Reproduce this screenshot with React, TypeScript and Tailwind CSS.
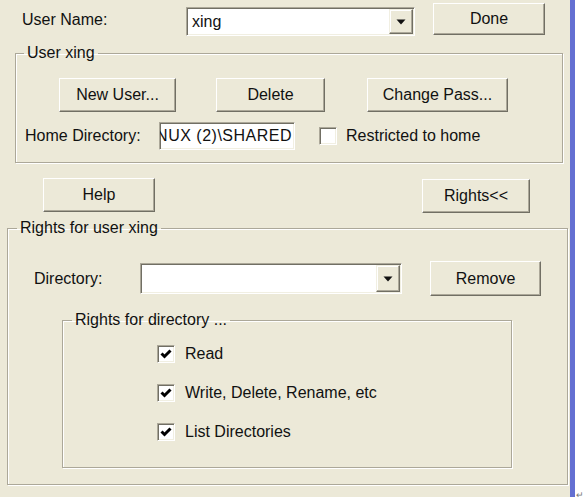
import type { ReactNode } from 'react';

function Btn({ className = '', children }: { className?: string; children: ReactNode }) {
  return (
    <div
      className={`flex shrink-0 items-center justify-center border border-t-white border-l-white border-r-[#716f64] border-b-[#716f64] bg-[#ece9d8] shadow-[inset_-1px_-1px_0_#aca899] ${className}`}
    >
      {children}
    </div>
  );
}

function Combo({ className = '', value = '' }: { className?: string; value?: string }) {
  return (
    <div
      className={`flex shrink-0 border border-t-[#aca899] border-l-[#aca899] border-r-white border-b-white bg-white p-[1px] shadow-[inset_1px_1px_0_#716f64,inset_-1px_-1px_0_#f1efe2] ${className}`}
    >
      <span className="flex-1 self-center pl-[4px]">{value}</span>
      <div className="flex w-[24px] items-center justify-center border border-t-[#f1efe2] border-l-[#f1efe2] border-r-[#716f64] border-b-[#716f64] bg-[#ece9d8] shadow-[inset_-1px_-1px_0_#aca899,inset_1px_1px_0_white]">
        <svg width="10" height="6" viewBox="0 0 10 6">
          <path d="M0.5 0.5 H9.5 L5 5.5 Z" fill="#111" />
        </svg>
      </div>
    </div>
  );
}

function Field({ className = '', value }: { className?: string; value: string }) {
  return (
    <div
      className={`flex shrink-0 items-center justify-end overflow-hidden whitespace-nowrap border border-t-[#aca899] border-l-[#aca899] border-r-white border-b-white bg-white pr-[2px] tracking-[0.5px] shadow-[inset_1px_1px_0_#716f64,inset_-1px_-1px_0_#f1efe2] ${className}`}
    >
      {value}
    </div>
  );
}

function Check({ checked = false, className = '' }: { checked?: boolean; className?: string }) {
  return (
    <div
      className={`flex h-[18px] w-[18px] shrink-0 items-center justify-center border border-t-[#aca899] border-l-[#aca899] border-r-white border-b-white bg-white shadow-[inset_1px_1px_0_#716f64,inset_-1px_-1px_0_#f1efe2] ${className}`}
    >
      {checked && (
        <svg width="12" height="12" viewBox="0 0 12 12">
          <path d="M1.5 5.5 L4.5 8.5 L10.5 2.5" fill="none" stroke="#000" strokeWidth="3" />
        </svg>
      )}
    </div>
  );
}

const groupBox =
  'shrink-0 border border-[#aca899] shadow-[1px_1px_0_white,inset_1px_1px_0_white]';

export default function App() {
  return (
    <div className="flex h-[501px] w-[585px] bg-white font-['Liberation_Sans',Arial,sans-serif] text-[16px] leading-[18px] text-[#111]">
      <div className="flex h-[497px] w-[575px] shrink-0 flex-col border-r-[5px] border-[#6470d2] bg-[#ece9d8]">
        <div className="flex h-[44px] shrink-0 items-start">
          <span className="ml-[22px] mt-[11px] w-[164px] shrink-0">User Name:</span>
          <Combo className="mt-[7px] h-[29px] w-[229px]" value="xing" />
          <Btn className="ml-[18px] mt-[3px] h-[32px] w-[112px]">Done</Btn>
        </div>

        <fieldset className={`${groupBox} ml-[15px] h-[119px] w-[548px]`}>
          <legend className="ml-[8px] px-[3px]">User xing</legend>
          <div className="mt-[16px] flex">
            <Btn className="ml-[43px] h-[34px] w-[117px]">New User...</Btn>
            <Btn className="ml-[40px] h-[34px] w-[109px]">Delete</Btn>
            <Btn className="ml-[42px] h-[34px] w-[141px]">Change Pass...</Btn>
          </div>
          <div className="mt-[10px] flex h-[28px] items-center">
            <span className="ml-[9px] w-[134px] shrink-0">Home Directory:</span>
            <Field className="h-[28px] w-[136px]" value="NUX (2)\SHARED" />
            <Check className="ml-[24px]" />
            <span className="ml-[9px]">Restricted to home</span>
          </div>
        </fieldset>

        <div className="mt-[15px] flex shrink-0">
          <Btn className="ml-[43px] h-[34px] w-[112px]">Help</Btn>
          <Btn className="ml-[267px] mt-[1px] h-[34px] w-[108px]">Rights&lt;&lt;</Btn>
        </div>

        <fieldset className={`${groupBox} ml-[7px] mt-[6px] h-[266px] w-[561px]`}>
          <legend className="ml-[9px] px-[3px]">Rights for user xing</legend>
          <div className="mt-[24px] flex h-[35px] items-center">
            <span className="ml-[26px] w-[106px] shrink-0">Directory:</span>
            <Combo className="h-[31px] w-[262px]" />
            <Btn className="ml-[28px] h-[35px] w-[111px]">Remove</Btn>
          </div>

          <fieldset className={`${groupBox} ml-[54px] mt-[15px] h-[157px] w-[450px]`}>
            <legend className="ml-[9px] px-[3px]">Rights for directory ...</legend>
            <div className="flex flex-col gap-[21px] pl-[94px] pt-[16px]">
              {['Read', 'Write, Delete, Rename, etc', 'List Directories'].map((label) => (
                <div key={label} className="flex h-[18px] items-center">
                  <Check checked />
                  <span className="ml-[10px]">{label}</span>
                </div>
              ))}
            </div>
          </fieldset>
        </fieldset>
      </div>
      <div className="flex flex-1 items-end justify-center pb-[1px] text-[9px] leading-[9px] text-[#777]">↵</div>
    </div>
  );
}
